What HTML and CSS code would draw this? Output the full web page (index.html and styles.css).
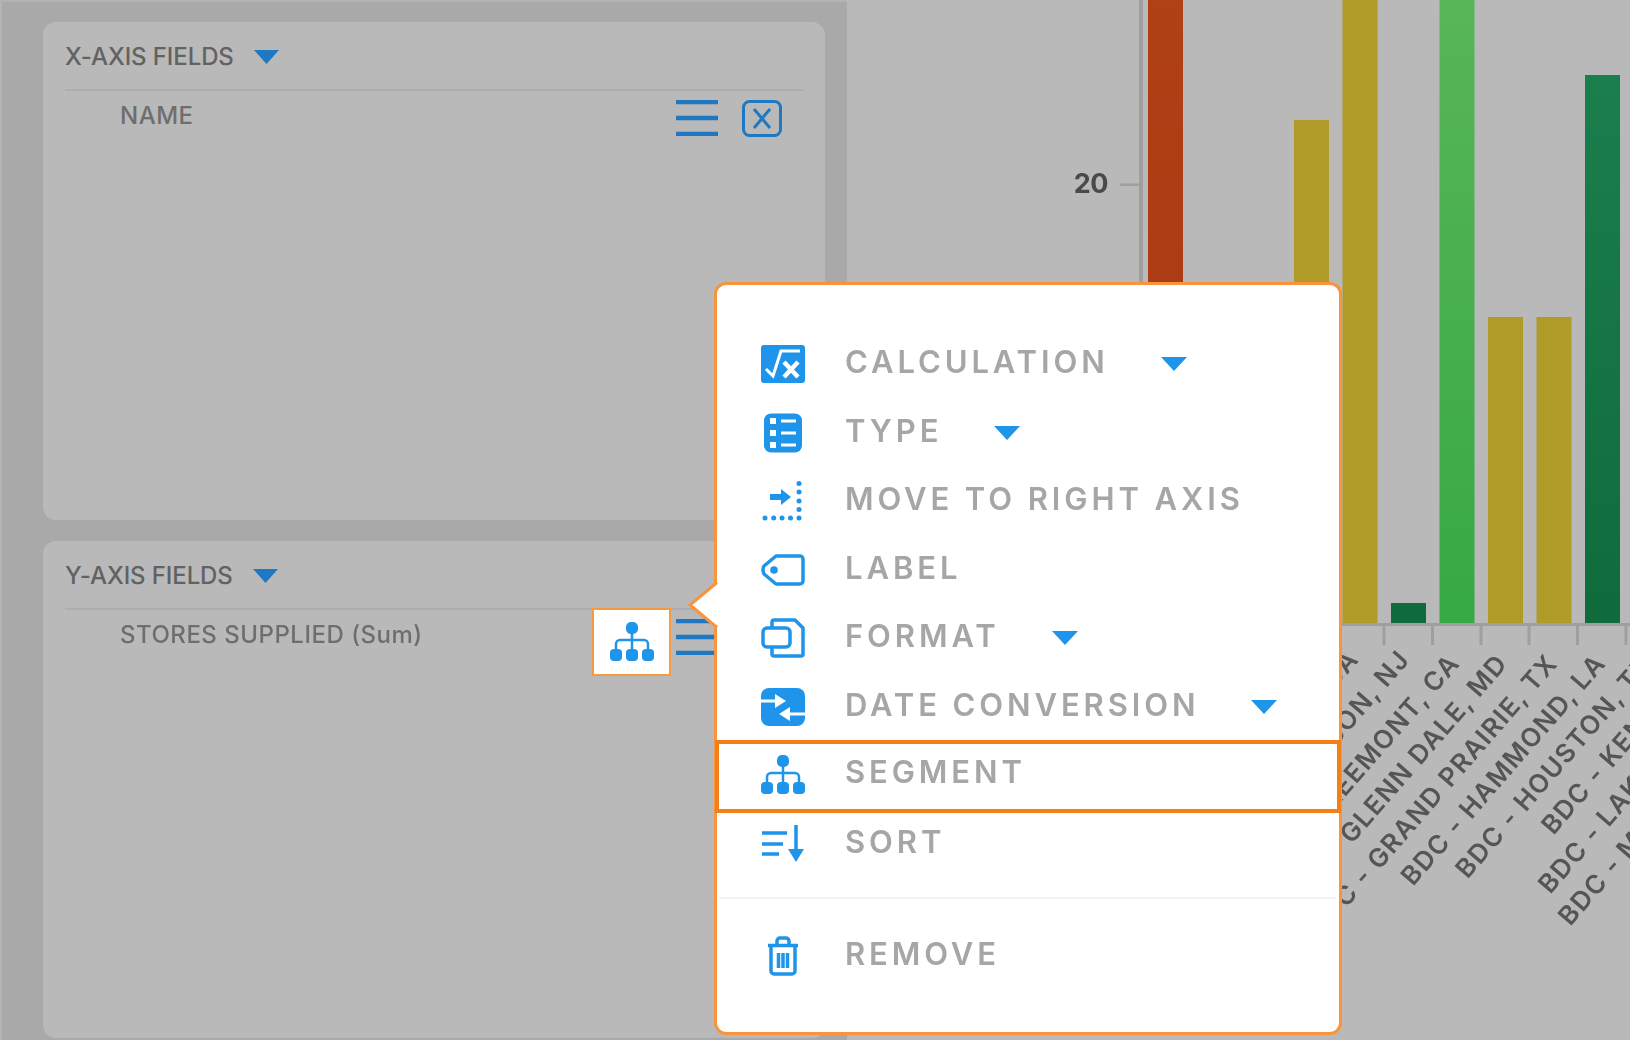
FILE: index.html
```html
<!DOCTYPE html>
<html lang="en">
<head>
<meta charset="utf-8">
<title>Chart field options</title>
<link rel="stylesheet" href="styles.css">
</head>
<body>
<div class="page">
  <aside class="fields">
    <section class="card card--x">
      <header class="card-head">
        <span class="card-title">X-AXIS FIELDS</span>
        <svg class="head-caret" viewBox="0 0 25 14"><path d="M0 0H25L12.5 14Z"/></svg>
      </header>
      <div class="field-row">
        <span class="field-name">NAME</span>
        <div class="field-actions">
          <svg class="ham" viewBox="0 0 42 36"><path d="M0 2H42M0 18H42M0 34H42"/></svg>
          <svg class="xbox" viewBox="0 0 40 37"><rect x="1.5" y="1.5" width="37" height="34" rx="6"/><path d="M12 9L28 28M28 9L12 28"/></svg>
        </div>
      </div>
    </section>
    <section class="card card--y">
      <header class="card-head">
        <span class="card-title">Y-AXIS FIELDS</span>
        <svg class="head-caret" viewBox="0 0 25 14"><path d="M0 0H25L12.5 14Z"/></svg>
      </header>
      <div class="field-row">
        <span class="field-name">STORES SUPPLIED (Sum)</span>
        <div class="field-actions">
          <div class="seg-btn">
            <svg class="icon" viewBox="0 0 44 40"><use href="#i-seg"/></svg>
          </div>
          <svg class="ham" viewBox="0 0 42 36"><path d="M0 2H42M0 18H42M0 34H42"/></svg>
          <svg class="xbox" viewBox="0 0 40 37"><rect x="1.5" y="1.5" width="37" height="34" rx="6"/><path d="M12 9L28 28M28 9L12 28"/></svg>
        </div>
      </div>
    </section>
  </aside>

  <main class="chart">
    <svg class="chart-svg" viewBox="847 0 783 1040" width="783" height="1040">
      <defs>
        <linearGradient id="g-red" x1="0" y1="0" x2="0" y2="1"><stop offset="0" stop-color="#b04016"/><stop offset="1" stop-color="#a93510"/></linearGradient>
        <linearGradient id="g-green" gradientUnits="userSpaceOnUse" x1="0" y1="0" x2="0" y2="624"><stop offset="0" stop-color="#58b658"/><stop offset="1" stop-color="#36a943"/></linearGradient>
        <linearGradient id="g-dark" gradientUnits="userSpaceOnUse" x1="0" y1="75" x2="0" y2="624"><stop offset="0" stop-color="#1b7e4d"/><stop offset="1" stop-color="#0f6b3c"/></linearGradient>
      </defs>
      <rect class="axis" x="1139" y="0" width="4" height="626"/>
      <rect class="axis" x="1120" y="183.500" width="19" height="2.500"/>
      <text class="tick-label" x="1108" y="193" text-anchor="end">20</text>
      <rect x="1148" y="0" width="35" height="624" fill="url(#g-red)"/>
      <rect class="gold" x="1294" y="120" width="35" height="504"/>
      <rect class="gold" x="1342.500" y="0" width="35" height="624"/>
      <rect x="1391" y="603" width="35" height="21" fill="url(#g-dark)"/>
      <rect x="1439.500" y="0" width="35" height="624" fill="url(#g-green)"/>
      <rect class="gold" x="1488" y="317" width="35" height="307"/>
      <rect class="gold" x="1536.500" y="317" width="35" height="307"/>
      <rect x="1585" y="75" width="35" height="549" fill="url(#g-dark)"/>
      <rect class="axis" x="1139" y="623" width="491" height="3"/>
      <path class="ticks" d="M1384 626V645M1432.500 626V645M1481 626V645M1529 626V645M1577.500 626V645M1626 626V645"/>
      <g class="x-labels" text-anchor="end">
        <text x="1360" y="660" transform="rotate(-49 1360 660)">BDC - ATLANTA, GA</text>
        <text x="1411" y="660" transform="rotate(-49 1411 660)">BDC - EDISON, NJ</text>
        <text x="1461" y="664" transform="rotate(-49 1461 664)">BDC - FREEMONT, CA</text>
        <text x="1509" y="664" transform="rotate(-49 1509 664)">BDC - GLENN DALE, MD</text>
        <text x="1559" y="664" transform="rotate(-49 1559 664)">BDC - GRAND PRAIRIE, TX</text>
        <text x="1607" y="664" transform="rotate(-49 1607 664)">BDC - HAMMOND, LA</text>
        <text x="1655" y="664" transform="rotate(-49 1655 664)">BDC - HOUSTON, TX</text>
        <text x="1703" y="664" transform="rotate(-49 1703 664)">BDC - KENT, WA</text>
        <text x="1751" y="664" transform="rotate(-49 1751 664)">BDC - LAKEWOOD, NJ</text>
        <text x="1799" y="664" transform="rotate(-49 1799 664)">BDC - MINNEAPOLIS, MN</text>
        <text x="1847" y="664" transform="rotate(-49 1847 664)">BDC - NASHVILLE, TN</text>
      </g>
    </svg>
  </main>

  <div class="menu">
    <svg class="menu-arrow" viewBox="0 0 32 48"><path d="M30 1.500L3 24L30 46.500"/></svg>
    <ul class="menu-list">
      <li class="menu-row">
        <svg class="icon" viewBox="0 0 44 40"><rect y="1" width="44" height="38" rx="3"/><path class="w-line" d="M5 25L12 32L20 7H39"/><path class="w-line w-line--fat" d="M23 18L37 33M37 18L23 33"/></svg>
        <span class="menu-text">CALCULATION</span><svg class="caret" viewBox="0 0 26 14"><path d="M0 0H26L13 14Z"/></svg>
      </li>
      <li class="menu-row">
        <svg class="icon" viewBox="0 0 44 40"><rect x="3" y="0.500" width="38" height="39" rx="7"/><path class="w-line" d="M20 8H35M20 20H35M20 32H35"/><path class="w-fill" d="M9 5h6v6H9zM9 17h6v6H9zM9 29h6v6H9z"/></svg>
        <span class="menu-text">TYPE</span><svg class="caret" viewBox="0 0 26 14"><path d="M0 0H26L13 14Z"/></svg>
      </li>
      <li class="menu-row">
        <svg class="icon" viewBox="0 0 44 40"><path d="M9 13H20V8L30 16L20 24V19H9Z"/><g><circle cx="4" cy="37" r="2.500"/><circle cx="12.700" cy="37" r="2.500"/><circle cx="21" cy="37" r="2.500"/><circle cx="29.500" cy="37" r="2.500"/><circle cx="38" cy="37" r="2.500"/><circle cx="38" cy="2.500" r="2.500"/><circle cx="38" cy="11" r="2.500"/><circle cx="38" cy="20" r="2.500"/><circle cx="38" cy="28.500" r="2.500"/></g></svg>
        <span class="menu-text">MOVE TO RIGHT AXIS</span>
      </li>
      <li class="menu-row">
        <svg class="icon" viewBox="0 0 44 40"><path class="b-line" d="M15 6H39a3 3 0 0 1 3 3V31a3 3 0 0 1-3 3H15L3 24Q1 20 3 16Z"/><circle cx="13" cy="20" r="3.800"/></svg>
        <span class="menu-text">LABEL</span>
      </li>
      <li class="menu-row">
        <svg class="icon" viewBox="0 0 44 40"><path class="b-line" d="M11 10V4a2 2 0 0 1 2-2H34L42 10V36a2 2 0 0 1-2 2H13a2 2 0 0 1-2-2V29"/><rect class="b-line" x="2" y="10" width="27" height="19" rx="4"/></svg>
        <span class="menu-text">FORMAT</span><svg class="caret" viewBox="0 0 26 14"><path d="M0 0H26L13 14Z"/></svg>
      </li>
      <li class="menu-row">
        <svg class="icon" viewBox="0 0 44 40"><rect y="1" width="44" height="38" rx="8"/><path class="w-line" d="M0 14H15M44 27H28"/><path class="w-fill" d="M14 7L25 14L14 21ZM29 20L18 27L29 34Z"/></svg>
        <span class="menu-text">DATE CONVERSION</span><svg class="caret" viewBox="0 0 26 14"><path d="M0 0H26L13 14Z"/></svg>
      </li>
      <li class="menu-row menu-row--active">
        <svg class="icon" viewBox="0 0 44 40"><use href="#i-seg"/></svg>
        <span class="menu-text">SEGMENT</span>
      </li>
      <li class="menu-row">
        <svg class="icon" viewBox="0 0 44 40"><path class="b-line" d="M1 9H26M1 20H22M1 30H18M35 1V30"/><path d="M27 25H43L35 38Z"/></svg>
        <span class="menu-text">SORT</span>
      </li>
      <li class="menu-sep"></li>
      <li class="menu-row">
        <svg class="icon" viewBox="0 0 44 40"><path class="b-line" d="M7 9.500H37M16 8V5a3 3 0 0 1 3-3H25a3 3 0 0 1 3 3V8"/><path class="b-line" d="M10 11V35a3 3 0 0 0 3 3H31a3 3 0 0 0 3-3V11M17.500 17V32M22 17V32M26.500 17V32"/></svg>
        <span class="menu-text">REMOVE</span>
      </li>
    </ul>
  </div>

  <svg class="defs" width="0" height="0">
    <symbol id="i-seg" viewBox="0 0 44 40">
      <path class="seg-link" d="M22 9V28M6 28V22a4 4 0 0 1 4-4H34a4 4 0 0 1 4 4V28"/>
      <rect x="16" y="0" width="12" height="12" rx="5"/>
      <rect x="0" y="27" width="12" height="12" rx="4"/>
      <rect x="16" y="27" width="12" height="12" rx="4"/>
      <rect x="32" y="27" width="12" height="12" rx="4"/>
    </symbol>
  </svg>
</div>
</body>
</html>
```
FILE: styles.css
```css
* { box-sizing: border-box; }
html, body { margin: 0; padding: 0; }
body { background: #b9b9b9; font-family: Inter, "Liberation Sans", sans-serif; }

.page {
  position: relative;
  display: flex;
  width: 1630px;
  height: 1040px;
  overflow: hidden;
  filter: blur(0.7px);
}

/* left field panel */
.fields {
  flex: 0 0 847px;
  display: flex;
  flex-direction: column;
  gap: 21px;
  padding: 22px 22px 0 43px;
  background: #a9a9a9;
  box-shadow: inset 2px 2px 0 #b3b3b3;
}
.card {
  padding: 0 21px 0 22px;
  background: #b9b9b9;
  border-radius: 13px;
}
.card--x { height: 498px; }
.card--y { flex: 1; margin-bottom: 2px; }
.card-head {
  display: flex;
  align-items: center;
  gap: 20px;
  height: 69px;
  padding-top: 2px;
  border-bottom: 2px solid #aeaeae;
}
.card-title {
  color: #626262;
  font-size: 24px;
  font-weight: 500;
  letter-spacing: -0.1px;
}
.head-caret { width: 25px; height: 14px; fill: #1f78c2; }
.field-row {
  display: flex;
  justify-content: space-between;
  padding: 11px 22px 0 55px;
}
.field-name {
  margin-top: 1px;
  color: #6e6e6e;
  font-size: 24px;
  font-weight: 500;
  letter-spacing: 0.5px;
  line-height: 26px;
}
.field-actions {
  position: relative;
  display: flex;
  align-items: flex-start;
  gap: 24px;
}
.ham { width: 42px; height: 36px; margin-top: -2px; fill: none; stroke: #1f78c2; stroke-width: 4.5; }
.xbox { width: 40px; height: 37px; margin-top: -2px; fill: none; stroke: #1f78c2; stroke-width: 3; }
.seg-btn {
  position: absolute;
  top: -13px;
  right: 111px;
  display: flex;
  align-items: center;
  justify-content: center;
  width: 79px;
  height: 68px;
  background: #fff;
  border: 2px solid #f7993f;
}

/* chart */
.chart { flex: 1; }
.chart-svg { display: block; }
.axis { fill: #9f9f9f; }
.ticks { stroke: #9f9f9f; stroke-width: 3; fill: none; }
.gold { fill: #b09a28; }
.tick-label { fill: #4a4a4a; font-size: 27px; font-weight: 700; letter-spacing: -0.5px; }
.x-labels { fill: #555; font-size: 26px; font-weight: 600; letter-spacing: 1.4px; }

/* popup menu */
.menu {
  position: absolute;
  top: 282px;
  left: 714px;
  width: 628px;
  height: 753px;
  padding-top: 45px;
  background: #fff;
  border: 3px solid #f7943c;
  border-radius: 12px;
}
.menu-arrow {
  position: absolute;
  top: 296px;
  left: -30px;
  width: 32px;
  height: 48px;
  fill: #fff;
  stroke: #f7943c;
  stroke-width: 3;
}
.menu-list { margin: 0; padding: 0; list-style: none; }
.menu-row {
  position: relative;
  display: flex;
  align-items: center;
  height: 68.5px;
  padding-left: 44px;
}
.menu-row--active::after {
  content: "";
  position: absolute;
  inset: -1px -2px -3px -2px;
  border: 4px solid #f57f17;
}
.menu-row--active .menu-text { margin-bottom: 8px; }
.icon { flex: 0 0 44px; width: 44px; height: 40px; fill: #1e94ea; }
.menu-text {
  margin: 0 0 5px 40px;
  color: #a6a6a6;
  font-size: 31px;
  font-weight: 600;
  letter-spacing: 3.9px;
  white-space: nowrap;
}
.caret { width: 26px; height: 14px; margin: 0 0 0 52px; fill: #1e94ea; }
.menu-sep { height: 2px; margin: 19px 3px 23px 2px; background: #f2f2f2; }
.w-line { fill: none; stroke: #fff; stroke-width: 3; }
.w-line--fat { stroke-width: 4.5; }
.w-fill { fill: #fff; }
.b-line { fill: none; stroke: #1e94ea; stroke-width: 3.5; stroke-linejoin: round; }
.seg-link { fill: none; stroke: #1e94ea; stroke-width: 2.5; }
.defs { position: absolute; }
```
